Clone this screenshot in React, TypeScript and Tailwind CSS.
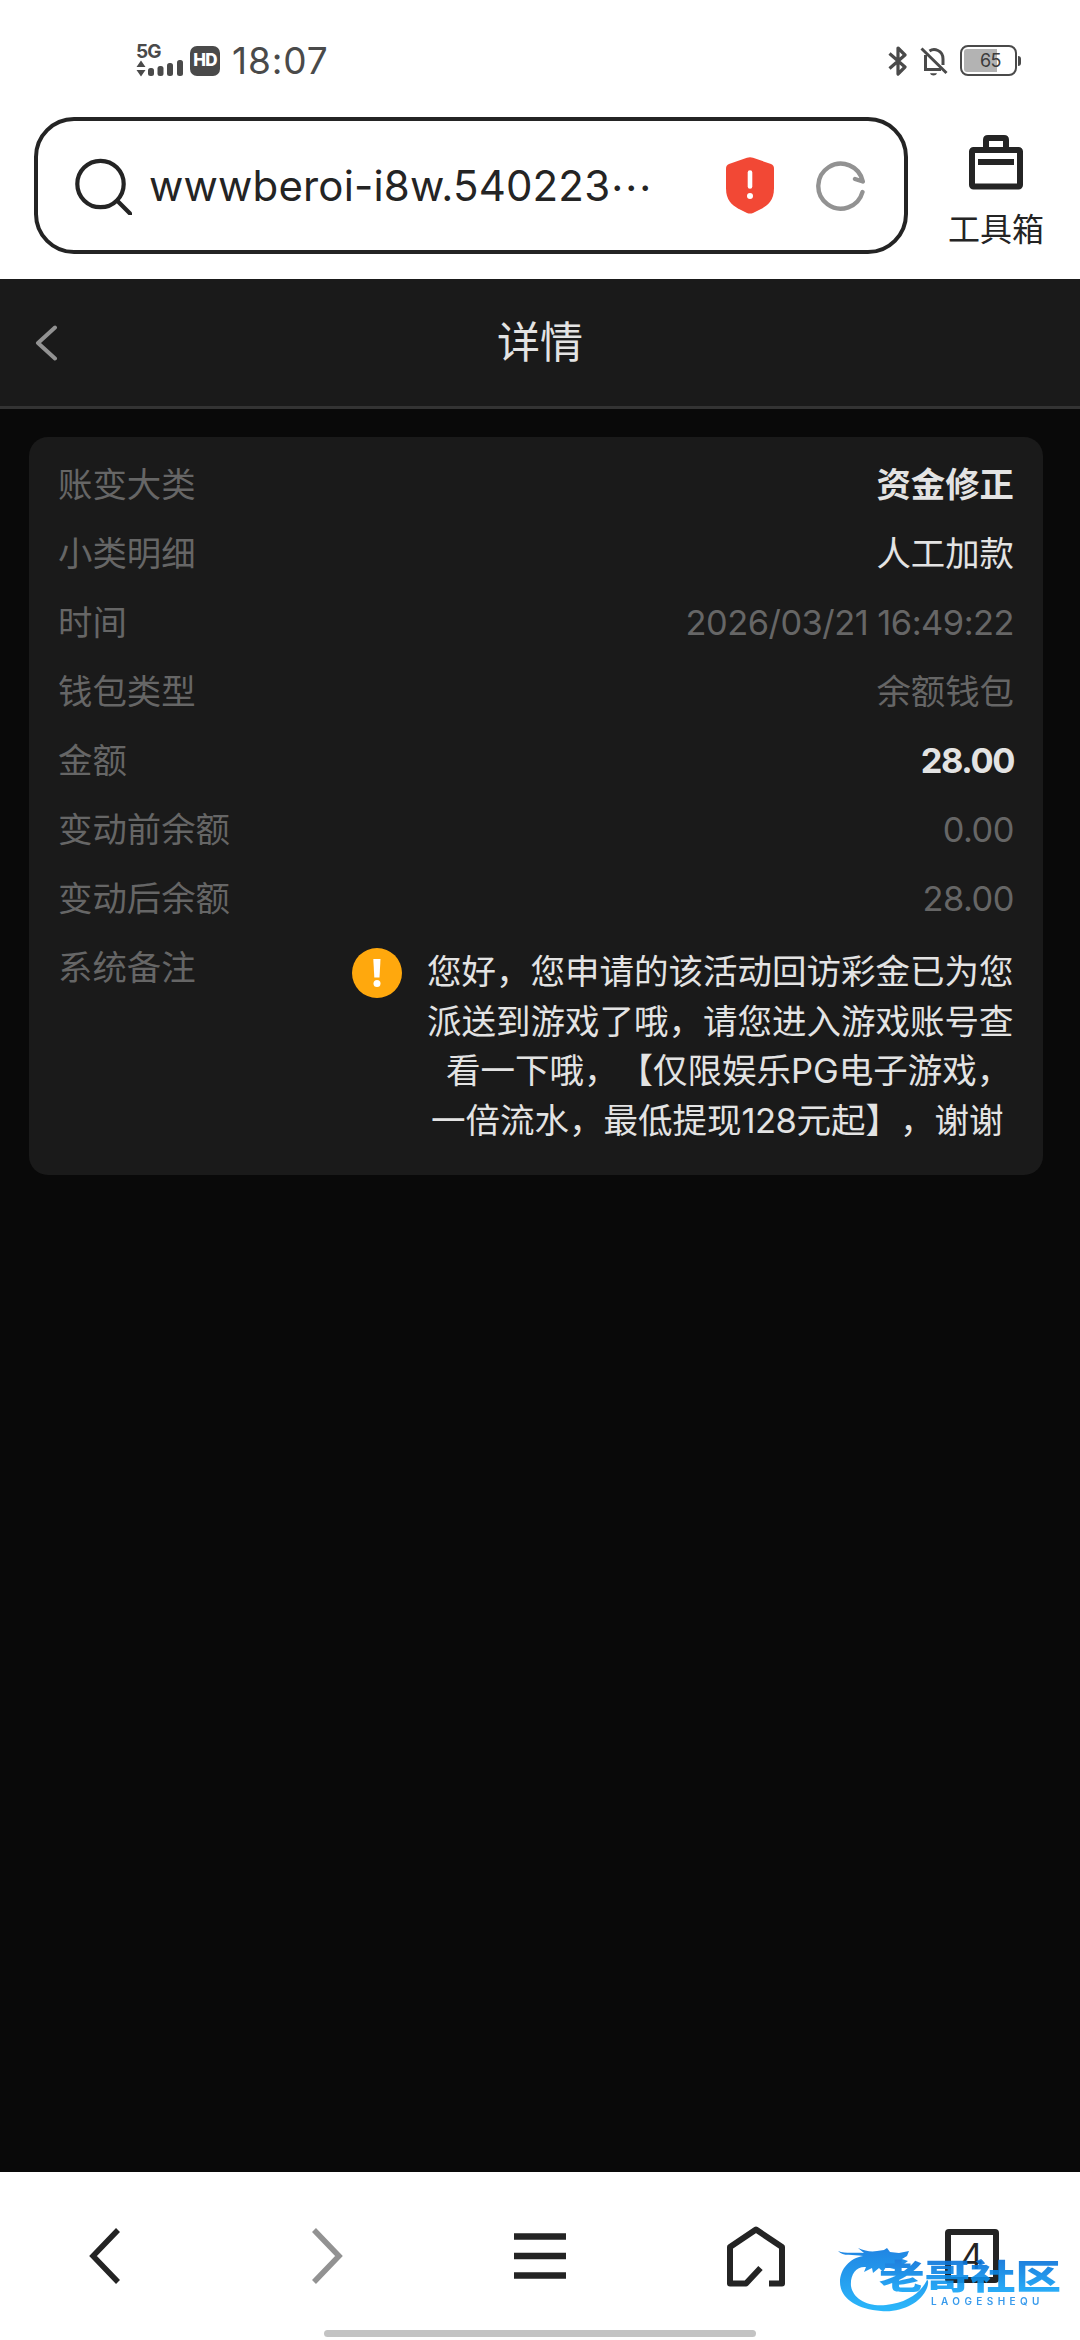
/** 账变详情页 — 手机浏览器外壳 + 详情卡片 */
import { clsx } from "clsx";

interface DetailRow {
  label: string;
  value: string;
  tone: "strong" | "normal" | "muted";
  numeric?: boolean;
}

const ROWS: DetailRow[] = [
  { label: "账变大类", value: "资金修正", tone: "strong" },
  { label: "小类明细", value: "人工加款", tone: "normal" },
  { label: "时间", value: "2026/03/21 16:49:22", tone: "muted", numeric: true },
  { label: "钱包类型", value: "余额钱包", tone: "muted" },
  { label: "金额", value: "28.00", tone: "strong", numeric: true },
  { label: "变动前余额", value: "0.00", tone: "muted", numeric: true },
  { label: "变动后余额", value: "28.00", tone: "muted", numeric: true },
];

function StatusBar() {
  return (
    <div className="flex h-[117px] items-center justify-between pt-1 pr-[59px] pl-[136px] text-[#4a4a4a]">
      <div className="flex items-center">
        <div className="flex h-[34px] w-12 flex-col">
          <span className="h-[15px] text-[19px] leading-[15px] font-bold tracking-[-1px]">5G</span>
          <svg width="48" height="19" viewBox="0 0 48 19" fill="currentColor">
            <path d="M5 1.5 9.5 8h-9zM.5 11h9L5 17.5z" />
            <rect x="12" y="9" width="6" height="8" rx="2.5" />
            <rect x="21.500" y="7" width="6" height="10" rx="2.500" />
            <rect x="31" y="4" width="6" height="13" rx="2.500" />
            <rect x="41" y="1" width="6" height="16" rx="2.500" />
          </svg>
        </div>
        <span className="ml-1.5 flex h-[30px] w-[30px] items-center justify-center rounded-[7px] bg-[#4a4a4a] text-[17px] leading-none font-extrabold tracking-[-0.8px] text-white">
          HD
        </span>
        <span className="ml-[12px] text-[37px] leading-none tracking-[0.9px]">18:07</span>
      </div>

      <div className="flex items-center">
        <svg width="20" height="30" viewBox="0 0 20 30" fill="none" stroke="currentColor" strokeWidth="3.200" strokeLinejoin="round">
          <path d="M1.500 7.500 17 21l-7 7V2l7 7L1.500 22.500" />
        </svg>
        <svg className="ml-3" width="28" height="30" viewBox="0 0 28 30" fill="none" stroke="currentColor" strokeWidth="3">
          <path d="M5.500 9v14.500H21M9.500 5C14 2 23 4 23 13v6M1.500 2.500 26.500 27" />
          <path d="M10 27.200h7c-1 3-6 3-7 0z" fill="currentColor" stroke="none" />
        </svg>
        <div className="ml-3 flex h-[31px] w-[57px] rounded-[8px] border-[2.5px] border-[#4a4a4a] p-[2px]">
          <div className="relative h-full w-full rounded-[3px] bg-white">
            <div className="h-full w-[33px] rounded-l-[3px] bg-[#b3b3b3]" />
            <span className="absolute inset-0 flex items-center justify-center pl-1 text-[18px] leading-none tracking-[-0.5px] text-[#3c3c3c]">
              65
            </span>
          </div>
        </div>
        <span className="ml-px h-[10px] w-[3px] rounded-r-sm bg-[#4a4a4a]" />
      </div>
    </div>
  );
}

function AddressBar() {
  return (
    <div className="flex h-[162px]">
      <div className="ml-[34px] flex h-[137px] w-[874px] shrink-0 items-center rounded-[40px] border-[4.500px] border-[#242424]">
        <svg className="ml-9 shrink-0" width="58" height="58" viewBox="0 0 58 58" fill="none" stroke="#242424" strokeWidth="4.200" strokeLinecap="round">
          <circle cx="26.500" cy="27" r="23.200" />
          <path d="m43.500 44 13 13" />
        </svg>
        <span className="ml-[17px] flex w-[577px] items-center text-[42px] leading-none whitespace-nowrap text-[#242424]">
          <span className="tracking-[0.15px]">wwwberoi-i8w.540223</span>
          <span className="font-['Noto_Sans_CJK_SC',sans-serif]">…</span>
        </span>
        <svg className="shrink-0" width="48" height="57" viewBox="0 0 48 57">
          <path d="M21 .8q3-1 6 0L45 7q3 1.200 3 4.500v20C48 43 42 48 36 51.500L27 56q-3 1.200-6 0L12 51.500C6 48 0 43 0 31.500v-20Q0 8.200 3 7z" fill="#f24835" />
          <path d="M24 15.500v14" stroke="#fff" strokeWidth="4.600" strokeLinecap="round" />
          <circle cx="24" cy="39" r="3" fill="#fff" />
        </svg>
        <svg className="ml-[42px] shrink-0" width="50" height="50" viewBox="0 0 50 50" fill="none" stroke="#929292" strokeWidth="4.400" strokeLinecap="round" strokeLinejoin="round">
          <path d="M46.500 31A22.500 22.500 0 1 1 46.800 20.500L39 18" />
        </svg>
      </div>
      <div className="flex flex-1 flex-col items-center pt-[18px] pl-1">
        <svg width="54" height="55" viewBox="0 0 54 55" fill="none" stroke="#242424" strokeWidth="6" strokeLinejoin="round">
          <rect x="3" y="15" width="48" height="36.500" rx="1.500" />
          <path d="M17 15V5q0-2 2-2h16q2 0 2 2v10M9 27h36" />
        </svg>
        <span className="mt-[22px] text-[32px] leading-[36px] text-[#242424]">工具箱</span>
      </div>
    </div>
  );
}

function DetailCard() {
  return (
    <section className="mt-7 mr-[37px] ml-[29px] h-[738px] rounded-[19px] bg-[#1a1a1a] px-[29px] pt-[14px] text-[34.400px]">
      {ROWS.map((row) => (
        <div key={row.label} className="flex h-[69px] items-center justify-between leading-none">
          <span className="text-[#666]">{row.label}</span>
          <span
            className={clsx(
              row.numeric && (row.tone === "strong" ? "tracking-[-1.400px]" : "tracking-[-0.5px]"),
              row.tone === "strong" && "font-bold text-[#e3e3e3]",
              row.tone === "normal" && "text-[#e3e3e3]",
              row.tone === "muted" && "text-[#666]",
            )}
          >
            {row.value}
          </span>
        </div>
      ))}

      {/* 系统备注 */}
      <div className="flex items-start">
        <span className="w-[294px] leading-[68px] text-[#666]">系统备注</span>
        <svg className="mt-[14px] shrink-0" width="50" height="50" viewBox="0 0 50 50">
          <circle cx="25" cy="25" r="25" fill="#ffa80d" />
          <path d="M21.300 11h7.200l-1 18.500h-5.200z" fill="#fff" />
          <circle cx="25" cy="35.500" r="3.500" fill="#fff" />
        </svg>
        <p className="mt-[13px] ml-[25px] text-[34.500px] leading-[49.700px] whitespace-nowrap text-[#e3e3e3] [text-spacing-trim:space-all]">
          <span className="block">您好，您申请的该活动回访彩金已为您</span>
          <span className="block">派送到游戏了哦，请您进入游戏账号查</span>
          <span className="ml-[19px] block">看一下哦，【仅限娱乐PG电子游戏，</span>
          <span className="ml-1 block">
            一倍流水，最低提现<span className="tracking-[-0.5px]">128</span>元起】，谢谢
          </span>
        </p>
      </div>
    </section>
  );
}

function Watermark() {
  return (
    <div className="pointer-events-none absolute top-[64px] left-[836px] h-[80px] w-[230px] opacity-90">
      <svg width="100" height="80" viewBox="0 0 100 80">
        <defs>
          <linearGradient id="dragon" x1="0" y1="0" x2="0" y2="1">
            <stop offset="0" stopColor="#0878e0" />
            <stop offset="1" stopColor="#14b0fb" />
          </linearGradient>
        </defs>
        <path
          d="M2 15c8 3 17 1 26 2l-6-5c7 3 13 4 19 3l7-1 3-2 3 4 9 1 10-2-2 5-5 3 6 2-4 3-11 1 8 3-7 1-8-2-3 5-4-4-6 5-1-5-8 4 2-5C20 30 14 39 15 50c2 13 17 21 35 19 20-2 35-12 41-25 2 0 1 5 0 8C85 67 65 77 45 75 20 73 4 62 4 46 4 33 14 22 27 20 17 18 7 21 2 15z"
          fill="url(#dragon)"
        />
      </svg>
      <span className="absolute top-[23px] left-[43px] origin-left scale-x-[1.32] bg-gradient-to-b from-[#0a70d8] to-[#14a9fb] bg-clip-text text-[34.500px] leading-[36px] font-black whitespace-nowrap text-transparent">
        老哥社区
      </span>
      <span className="absolute top-[60px] left-[95px] text-[10px] leading-none font-semibold tracking-[4.400px] text-[#2390ea]">LAOGESHEQU</span>
    </div>
  );
}

function BottomNav() {
  return (
    <nav className="relative h-[168px] bg-white">
      <div className="grid h-[158px] grid-cols-5 place-items-center pt-[10px]">
        <svg className="mr-1.5" width="32" height="56" viewBox="0 0 32 56" fill="none" stroke="#242424" strokeWidth="5.500">
          <path d="M29 2 4 28l25 26" />
        </svg>
        <svg className="ml-1.5" width="32" height="56" viewBox="0 0 32 56" fill="none" stroke="#929292" strokeWidth="5.500">
          <path d="m3 2 25 26L3 54" />
        </svg>
        <svg width="52" height="46" viewBox="0 0 52 46" stroke="#242424" strokeWidth="6.300">
          <path d="M0 3.500h52M0 23h52M0 42.500h52" />
        </svg>
        <svg width="58" height="61" viewBox="0 0 58 61" fill="none" stroke="#242424" strokeWidth="6" strokeLinejoin="round">
          <path d="M42 57.500h13V21L29 3.500 3 21v36.500h16L33.500 42" />
        </svg>
        <div className="flex h-[54px] w-[54px] items-center justify-center rounded-[4px] border-[6px] border-[#242424] text-[35px] leading-none text-[#242424]">
          4
        </div>
      </div>
      <div className="mx-auto h-[7px] w-[432px] rounded-full bg-[#c3c3c3]" />
      <Watermark />
    </nav>
  );
}

export default function App() {
  return (
    <div className="flex h-[2340px] w-[1080px] flex-col overflow-hidden bg-[#090909] font-['Inter','Noto_Sans_CJK_SC',sans-serif]">
      <div className="bg-white">
        <StatusBar />
        <AddressBar />
      </div>
      <header className="grid h-[130px] grid-cols-3 items-center border-b-[3px] border-[#333] bg-[#1a1a1a]">
        <svg className="ml-[35px]" width="24" height="36" viewBox="0 0 24 36" fill="none" stroke="#929292" strokeWidth="4" strokeLinecap="round" strokeLinejoin="round">
          <path d="M20 2.500 3 18l17 15.500" />
        </svg>
        <h1 className="text-center text-[43px] leading-none text-[#e3e3e3]">详情</h1>
      </header>
      <main className="flex-1">
        <DetailCard />
      </main>
      <BottomNav />
    </div>
  );
}
